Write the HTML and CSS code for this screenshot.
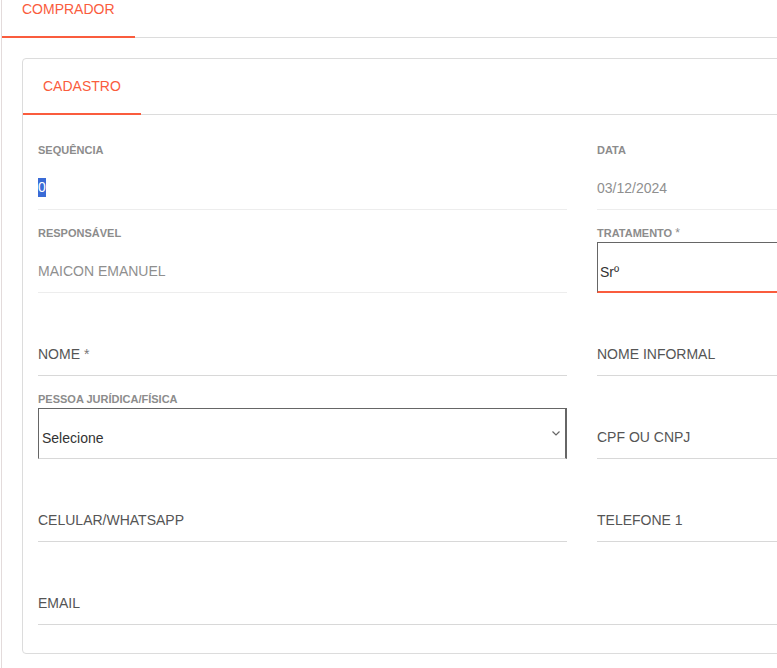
FILE: index.html
```html
<!DOCTYPE html>
<html lang="pt-BR">
<head>
<meta charset="utf-8">
<title>Comprador - Cadastro</title>
<link rel="stylesheet" href="styles.css">
</head>
<body>
<div class="page">
  <div class="tabs">
    <div class="tab active">COMPRADOR</div>
  </div>

  <div class="card">
    <div class="tabs card-tabs">
      <div class="tab active">CADASTRO</div>
    </div>

    <div class="form">
      <div class="field readonly">
        <div class="label">SEQUÊNCIA</div>
        <div class="control"><span class="selected">0</span></div>
      </div>
      <div class="field readonly">
        <div class="label">DATA</div>
        <div class="control">03/12/2024</div>
      </div>

      <div class="field readonly">
        <div class="label">RESPONSÁVEL</div>
        <div class="control">MAICON EMANUEL</div>
      </div>
      <div class="field">
        <div class="label">TRATAMENTO <span class="req">*</span></div>
        <div class="control select invalid">Srº</div>
      </div>

      <div class="field">
        <div class="label"></div>
        <div class="control placeholder">NOME <span class="req">*</span></div>
      </div>
      <div class="field">
        <div class="label"></div>
        <div class="control placeholder">NOME INFORMAL</div>
      </div>

      <div class="field">
        <div class="label">PESSOA JURÍDICA/FÍSICA</div>
        <div class="control select">
          Selecione
          <svg class="chevron" width="8" height="5" viewBox="0 0 8 5"><polyline points="0.5,0.5 4,4 7.5,0.5" fill="none" stroke="#666" stroke-width="1.2"/></svg>
        </div>
      </div>
      <div class="field">
        <div class="label"></div>
        <div class="control placeholder">CPF OU CNPJ</div>
      </div>

      <div class="field">
        <div class="label"></div>
        <div class="control placeholder">CELULAR/WHATSAPP</div>
      </div>
      <div class="field">
        <div class="label"></div>
        <div class="control placeholder">TELEFONE 1</div>
      </div>

      <div class="field wide">
        <div class="label"></div>
        <div class="control placeholder">EMAIL</div>
      </div>
    </div>
  </div>
</div>
</body>
</html>
```

FILE: styles.css
```css
html, body {
  margin: 0;
  padding: 0;
  overflow: hidden;
  background: #fff;
}

body {
  font-family: "Liberation Sans", Arial, sans-serif;
  font-size: 14px;
  color: #555;
}

.page {
  width: 1162px;
  margin-left: 1px;
  border-left: 1px solid #e3dbdb;
  min-height: 668px;
}

/* tab strips */
.tabs {
  display: flex;
  height: 38px;
  box-sizing: border-box;
  border-bottom: 1px solid #dcdcdc;
}

.tab {
  padding: 1px 20px 0;
  line-height: 16px;
  height: 38px;
  box-sizing: border-box;
  color: #fa5c3d;
  border-bottom: 2px solid #fa5c3d;
  margin-bottom: -1px;
}

.card {
  margin: 20px 0 0 20px;
  width: 1120px;
  border: 1px solid #dcdcdc;
  border-radius: 4px;
  box-sizing: border-box;
}

.card-tabs {
  height: 56px;
}

.card-tabs .tab {
  height: 56px;
  padding-top: 19px;
}

/* form grid */
.form {
  display: grid;
  grid-template-columns: 1fr 1fr;
  column-gap: 30px;
  padding: 12px 15px 28px;
}

.field {
  padding-top: 16px;
}

.field.wide {
  grid-column: 1 / -1;
}

.label {
  height: 16px;
  line-height: 14px;
  font-size: 11px;
  font-weight: bold;
  color: #8c8c8c;
}

.label .req {
  font-weight: normal;
  font-size: 12px;
}

.control {
  position: relative;
  height: 51px;
  box-sizing: border-box;
  padding-top: 21px;
  line-height: 16px;
  border-bottom: 1px solid #d8d8d8;
  white-space: nowrap;
}

.readonly .control {
  color: #8f8f8f;
  border-bottom-color: #ededed;
}

.placeholder {
  color: #555;
}

.placeholder .req {
  color: #777;
}

.selected {
  display: inline-block;
  background: #3a6bd6;
  color: #fff;
  line-height: 19px;
  margin-top: -2px;
  vertical-align: top;
}

.select {
  border: 1px solid #666;
  border-right-width: 2px;
  border-bottom: 1px solid #d8d8d8;
  padding: 21px 0 0 3px;
  color: #333;
}

.select.invalid {
  border-right-width: 1px;
  padding-left: 2px;
  border-bottom: 2px solid #fa5c3d;
}

.chevron {
  position: absolute;
  right: 5px;
  top: 22px;
}
```
